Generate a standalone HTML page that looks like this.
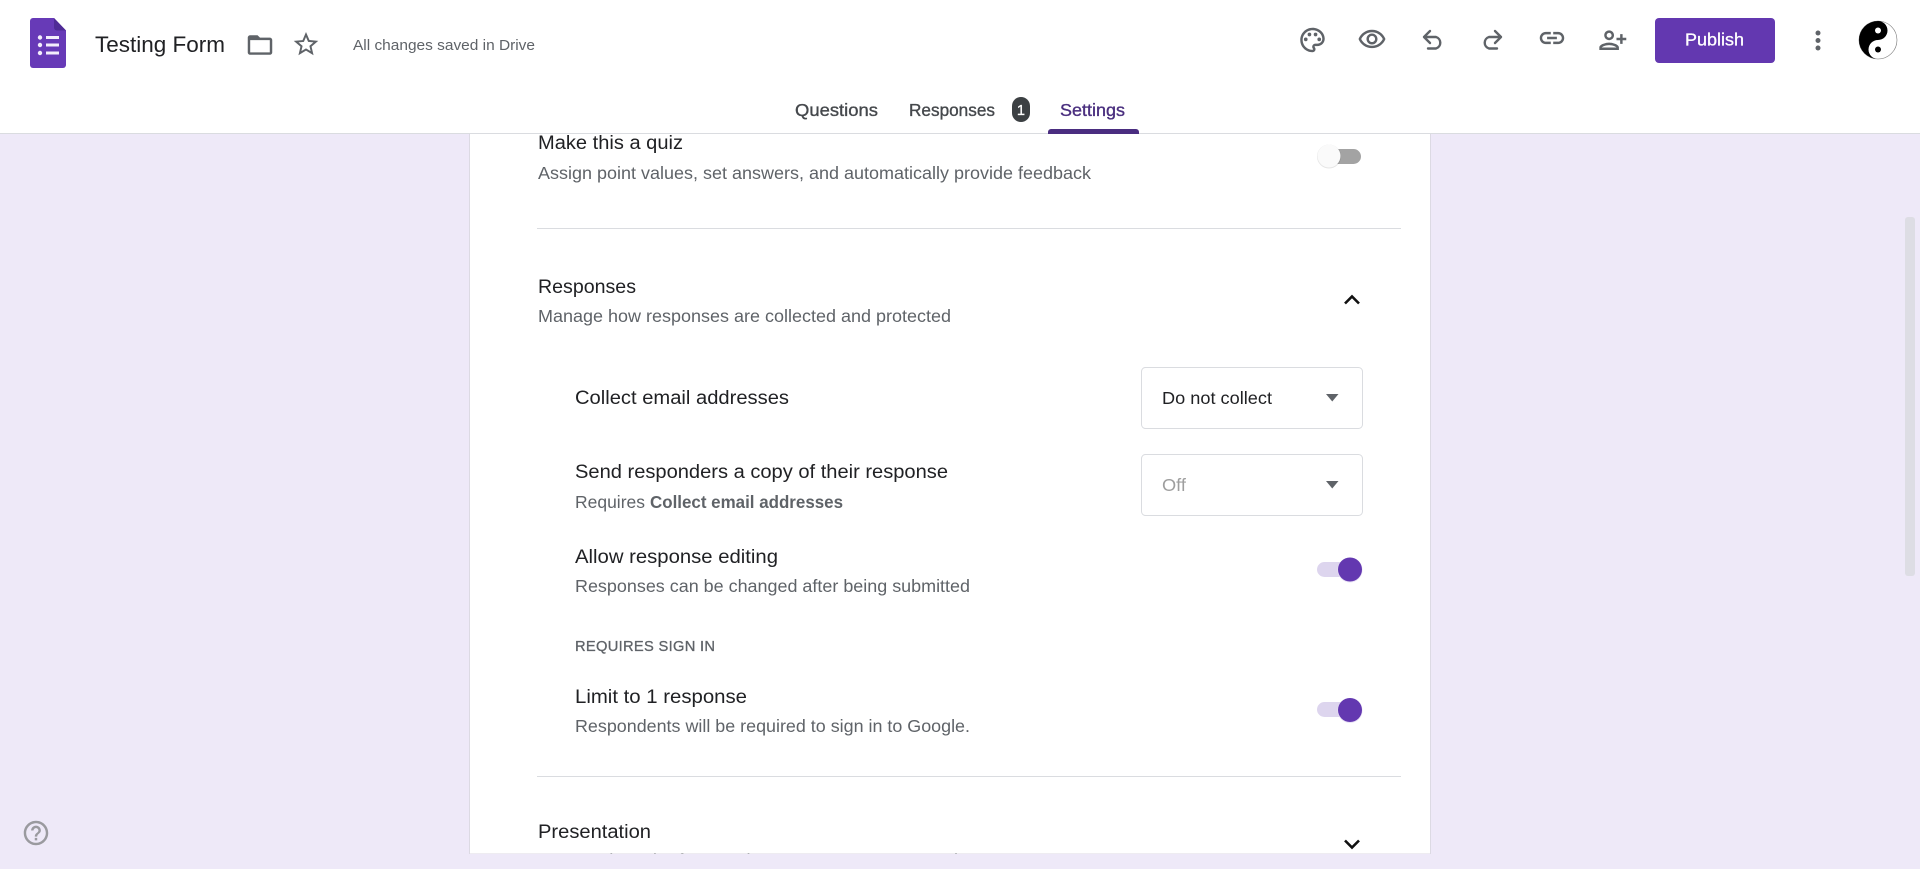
<!DOCTYPE html>
<html><head><meta charset="utf-8"><title>Testing Form</title>
<style>
html,body{margin:0;padding:0;width:1920px;height:869px;overflow:hidden;background:#eee9f8}
svg{display:block}
text{font-family:"Liberation Sans",Arial,sans-serif}
.t{font-size:19.6px;fill:#202124}
.s{font-size:17.1px;fill:#5f6368}
.i{fill:#5f6368}
.tab{font-size:17.1px;fill:#45484c;stroke:#45484c;stroke-width:.35px}
</style></head><body>
<svg xmlns="http://www.w3.org/2000/svg" width="1920" height="869" viewBox="0 0 1920 869">
<rect width="1920" height="869" fill="#eee9f8"/>
<rect x="1905" y="217" width="10" height="359" rx="3" fill="#dddde4"/>
<!-- card -->
<rect x="469.5" y="120" width="961" height="734" fill="#fff" stroke="#dcdae3" stroke-width="1"/>

<text class="t" x="538" y="149" textLength="145" lengthAdjust="spacingAndGlyphs">Make this a quiz</text>
<text class="s" x="538" y="179" textLength="553" lengthAdjust="spacingAndGlyphs">Assign point values, set answers, and automatically provide feedback</text>
<rect x="1318" y="149" width="43" height="15" rx="7.5" fill="#a3a3a3"/>
<circle cx="1329" cy="156.5" r="12" fill="#000" opacity=".1"/>
<circle cx="1329" cy="156" r="11.5" fill="#fafafa"/>
<rect x="537" y="228" width="864" height="1" fill="#dadce0"/>

<text class="t" x="538" y="293" textLength="98" lengthAdjust="spacingAndGlyphs">Responses</text>
<text class="s" x="538" y="322" textLength="413" lengthAdjust="spacingAndGlyphs">Manage how responses are collected and protected</text>
<path d="M1345 303.5l7-7 7 7" fill="none" stroke="#111" stroke-width="2.6"/>

<text class="t" x="575" y="404" textLength="214" lengthAdjust="spacingAndGlyphs">Collect email addresses</text>
<rect x="1141.5" y="367.500" width="221" height="61" rx="4" fill="#fff" stroke="#dadce0"/>
<text class="s" x="1162" y="404" textLength="110" lengthAdjust="spacingAndGlyphs" style="fill:#202124">Do not collect</text>
<path d="M1326 394h12.500l-6.250 7.500z" fill="#5f6368"/>

<text class="t" x="575" y="478" textLength="373" lengthAdjust="spacingAndGlyphs">Send responders a copy of their response</text>
<text class="s" x="575" y="508" textLength="70" lengthAdjust="spacingAndGlyphs">Requires</text>
<text class="s" x="650" y="508" textLength="193" lengthAdjust="spacingAndGlyphs" font-weight="700">Collect email addresses</text>
<rect x="1141.5" y="454.500" width="221" height="61" rx="4" fill="#fff" stroke="#dadce0"/>
<text class="s" x="1162" y="491" textLength="24" lengthAdjust="spacingAndGlyphs" style="fill:#9e9e9e">Off</text>
<path d="M1326 481h12.500l-6.250 7.500z" fill="#5f6368"/>

<text class="t" x="575" y="563" textLength="203" lengthAdjust="spacingAndGlyphs">Allow response editing</text>
<text class="s" x="575" y="592" textLength="395" lengthAdjust="spacingAndGlyphs">Responses can be changed after being submitted</text>
<rect x="1317" y="562" width="43" height="15" rx="7.5" fill="#ddd5ee"/>
<circle cx="1350" cy="570" r="12.500" fill="#e9e2f5"/>
<circle cx="1350" cy="569.500" r="12" fill="#6338b0"/>

<text x="575" y="651" font-size="14.700" fill="#5f6368" stroke="#5f6368" stroke-width=".3" textLength="140" lengthAdjust="spacing">REQUIRES SIGN IN</text>

<text class="t" x="575" y="703" textLength="172" lengthAdjust="spacingAndGlyphs">Limit to 1 response</text>
<text class="s" x="575" y="732" textLength="395" lengthAdjust="spacingAndGlyphs">Respondents will be required to sign in to Google.</text>
<rect x="1317" y="702" width="43" height="15" rx="7.500" fill="#ddd5ee"/>
<circle cx="1350" cy="710.500" r="12.500" fill="#e9e2f5"/>
<circle cx="1350" cy="710" r="12" fill="#6338b0"/>
<rect x="537" y="776" width="864" height="1" fill="#dadce0"/>

<text class="t" x="538" y="838" textLength="113" lengthAdjust="spacingAndGlyphs">Presentation</text>
<text class="s" x="538" y="866.500" textLength="420" lengthAdjust="spacingAndGlyphs">Manage how the form and responses are presented</text>
<path d="M1345 840.500l7 7 7-7" fill="none" stroke="#111" stroke-width="2.6"/>
<rect x="0" y="854" width="1900" height="15" fill="#eee9f8"/>

<!-- help -->
<g transform="translate(21.300 818.300) scale(1.2245)"><path fill="#9a9a9f" d="M11 18h2v-2h-2v2zm1-16C6.480 2 2 6.480 2 12s4.480 10 10 10 10-4.480 10-10S17.520 2 12 2zm0 18c-4.410 0-8-3.590-8-8s3.590-8 8-8 8 3.590 8 8-3.590 8-8 8zm0-14c-2.210 0-4 1.790-4 4h2c0-1.100.9-2 2-2s2 .9 2 2c0 2-3 1.750-3 5h2c0-2.250 3-2.500 3-5 0-2.210-1.790-4-4-4z"/></g>

<!-- header -->
<rect x="0" y="0" width="1920" height="133" fill="#fff"/>
<rect x="0" y="133" width="1920" height="1" fill="#dadce0"/>

<!-- forms logo -->
<path d="M33 18h21l12 12.500V65a3 3 0 0 1-3 3H33a3 3 0 0 1-3-3V21a3 3 0 0 1 3-3z" fill="#673ab7"/>
<path d="M54 18l12 12.500H57a3 3 0 0 1-3-3z" fill="#4f2b96"/>
<g fill="#f3eefb"><circle cx="40" cy="37.500" r="2.200"/><circle cx="40" cy="45" r="2.200"/><circle cx="40" cy="53" r="2.200"/><rect x="46" y="36" width="13" height="3"/><rect x="46" y="43.500" width="13" height="3"/><rect x="46" y="51.500" width="13" height="3"/></g>

<text x="95" y="52" font-size="22px" fill="#202124" textLength="130" lengthAdjust="spacingAndGlyphs">Testing Form</text>
<g transform="translate(245.300 30.300) scale(1.2245)"><path class="i" d="M20 6h-8l-2-2H4c-1.100 0-1.990.9-1.990 2L2 18c0 1.100.9 2 2 2h16c1.100 0 2-.9 2-2V8c0-1.100-.9-2-2-2zm0 12H4V8h16v10z"/></g>
<g transform="translate(291.300 29.500) scale(1.2245)"><path class="i" d="M22 9.240l-7.190-.62L12 2 9.190 8.630 2 9.240l5.460 4.730L5.820 21 12 17.270 18.180 21l-1.630-7.030L22 9.240zM12 15.400l-3.760 2.270 1-4.280-3.320-2.880 4.380-.38L12 6.100l1.710 4.040 4.380.38-3.320 2.880 1 4.280L12 15.400z"/></g>
<text x="353" y="50" font-size="14.700px" fill="#5f6368" textLength="182" lengthAdjust="spacingAndGlyphs">All changes saved in Drive</text>

<!-- right toolbar -->
<g transform="translate(1297.800 25.300) scale(1.2245)"><path class="i" d="M12 22C6.490 22 2 17.510 2 12S6.490 2 12 2s10 4.040 10 9c0 3.310-2.690 6-6 6h-1.770c-.28 0-.5.22-.5.5 0 .12.05.23.13.33.41.47.64 1.060.64 1.670A2.500 2.500 0 0 1 12 22zm0-18c-4.410 0-8 3.590-8 8s3.590 8 8 8c.28 0 .5-.22.5-.5a.54.54 0 0 0-.14-.35c-.41-.46-.63-1.050-.63-1.650a2.500 2.500 0 0 1 2.500-2.500H16c2.210 0 4-1.790 4-4 0-3.860-3.590-7-8-7z"/><circle class="i" cx="6.500" cy="11.500" r="1.500"/><circle class="i" cx="9.500" cy="7.500" r="1.500"/><circle class="i" cx="14.500" cy="7.500" r="1.500"/><circle class="i" cx="17.500" cy="11.500" r="1.500"/></g>
<g transform="translate(1357.300 24.300) scale(1.2245)"><path class="i" d="M12 6.500c3.790 0 7.170 2.130 8.820 5.500-1.650 3.370-5.020 5.500-8.820 5.500S4.830 15.370 3.180 12C4.830 8.630 8.210 6.500 12 6.500m0-2C7 4.500 2.730 7.610 1 12c1.730 4.390 6 7.500 11 7.500s9.270-3.110 11-7.500c-1.730-4.390-6-7.500-11-7.500zm0 5c1.380 0 2.500 1.120 2.500 2.500s-1.120 2.500-2.500 2.500-2.500-1.120-2.500-2.500 1.120-2.500 2.500-2.500m0-2c-2.480 0-4.500 2.020-4.500 4.500s2.020 4.500 4.500 4.500 4.500-2.020 4.500-4.500-2.020-4.500-4.500-4.500z"/></g>
<path d="M1430 31l-6 6 6 6M1424 37h12a6 6 0 0 1 0 11.500H1428" fill="none" stroke="#5f6368" stroke-width="2.400" stroke-linecap="round" stroke-linejoin="round"/>
<path d="M1495 31l6 6-6 6M1501 37h-12a6 6 0 0 0 0 11.500H1497" fill="none" stroke="#5f6368" stroke-width="2.400" stroke-linecap="round" stroke-linejoin="round"/>
<g transform="translate(1537.300 23.300) scale(1.2245)"><path class="i" d="M17 7h-4v2h4c1.650 0 3 1.350 3 3s-1.350 3-3 3h-4v2h4c2.760 0 5-2.240 5-5s-2.240-5-5-5zm-6 8H7c-1.650 0-3-1.350-3-3s1.350-3 3-3h4V7H7c-2.760 0-5 2.240-5 5s2.240 5 5 5h4v-2zm-3-4h8v2H8z"/></g>
<g transform="translate(1627.500 25.500) scale(-1.2245 1.2245)"><path class="i" d="M15 12c2.210 0 4-1.790 4-4s-1.790-4-4-4-4 1.790-4 4 1.790 4 4 4zm0-6c1.100 0 2 .9 2 2s-.9 2-2 2-2-.9-2-2 .9-2 2-2zm0 8c-2.670 0-8 1.340-8 4v2h16v-2c0-2.660-5.330-4-8-4zm-6 4c.22-.72 3.310-2 6-2 2.700 0 5.800 1.290 6 2H9zm-3-3v-3h3v-2H6V7H4v3H1v2h3v3h2z"/></g>

<rect x="1655" y="18" width="120" height="45" rx="4" fill="#6338b0"/>
<text x="1685" y="45.500" font-size="17.100px" fill="#fff" stroke="#fff" stroke-width=".3" textLength="59" lengthAdjust="spacingAndGlyphs">Publish</text>

<circle class="i" cx="1818" cy="33" r="2.500"/><circle class="i" cx="1818" cy="40.500" r="2.500"/><circle class="i" cx="1818" cy="48" r="2.500"/>

<circle cx="1878" cy="40" r="19" fill="#fff" stroke="#777" stroke-width=".6"/>
<path d="M1878 21A19 19 0 0 0 1878 59A9.500 9.500 0 0 1 1878 40A9.500 9.500 0 0 0 1878 21z" fill="#000"/>
<circle cx="1878" cy="30.500" r="3" fill="#fff"/><circle cx="1878" cy="49.500" r="3" fill="#000"/>

<!-- tabs -->
<text class="tab" x="795" y="116" textLength="83" lengthAdjust="spacingAndGlyphs">Questions</text>
<text class="tab" x="909" y="116" textLength="86" lengthAdjust="spacingAndGlyphs">Responses</text>
<rect x="1012" y="97" width="18" height="25" rx="9" fill="#3c4043"/>
<text x="1021" y="115" font-size="14.700px" fill="#fff" stroke="#fff" stroke-width=".3" text-anchor="middle">1</text>
<text class="tab" x="1060" y="116" textLength="65" lengthAdjust="spacingAndGlyphs" style="fill:#4a2f7f;stroke:#4a2f7f">Settings</text>
<path d="M1048 134v-2a3 3 0 0 1 3-3h85a3 3 0 0 1 3 3v2z" fill="#4a2d80"/>
</svg>
</body></html>
